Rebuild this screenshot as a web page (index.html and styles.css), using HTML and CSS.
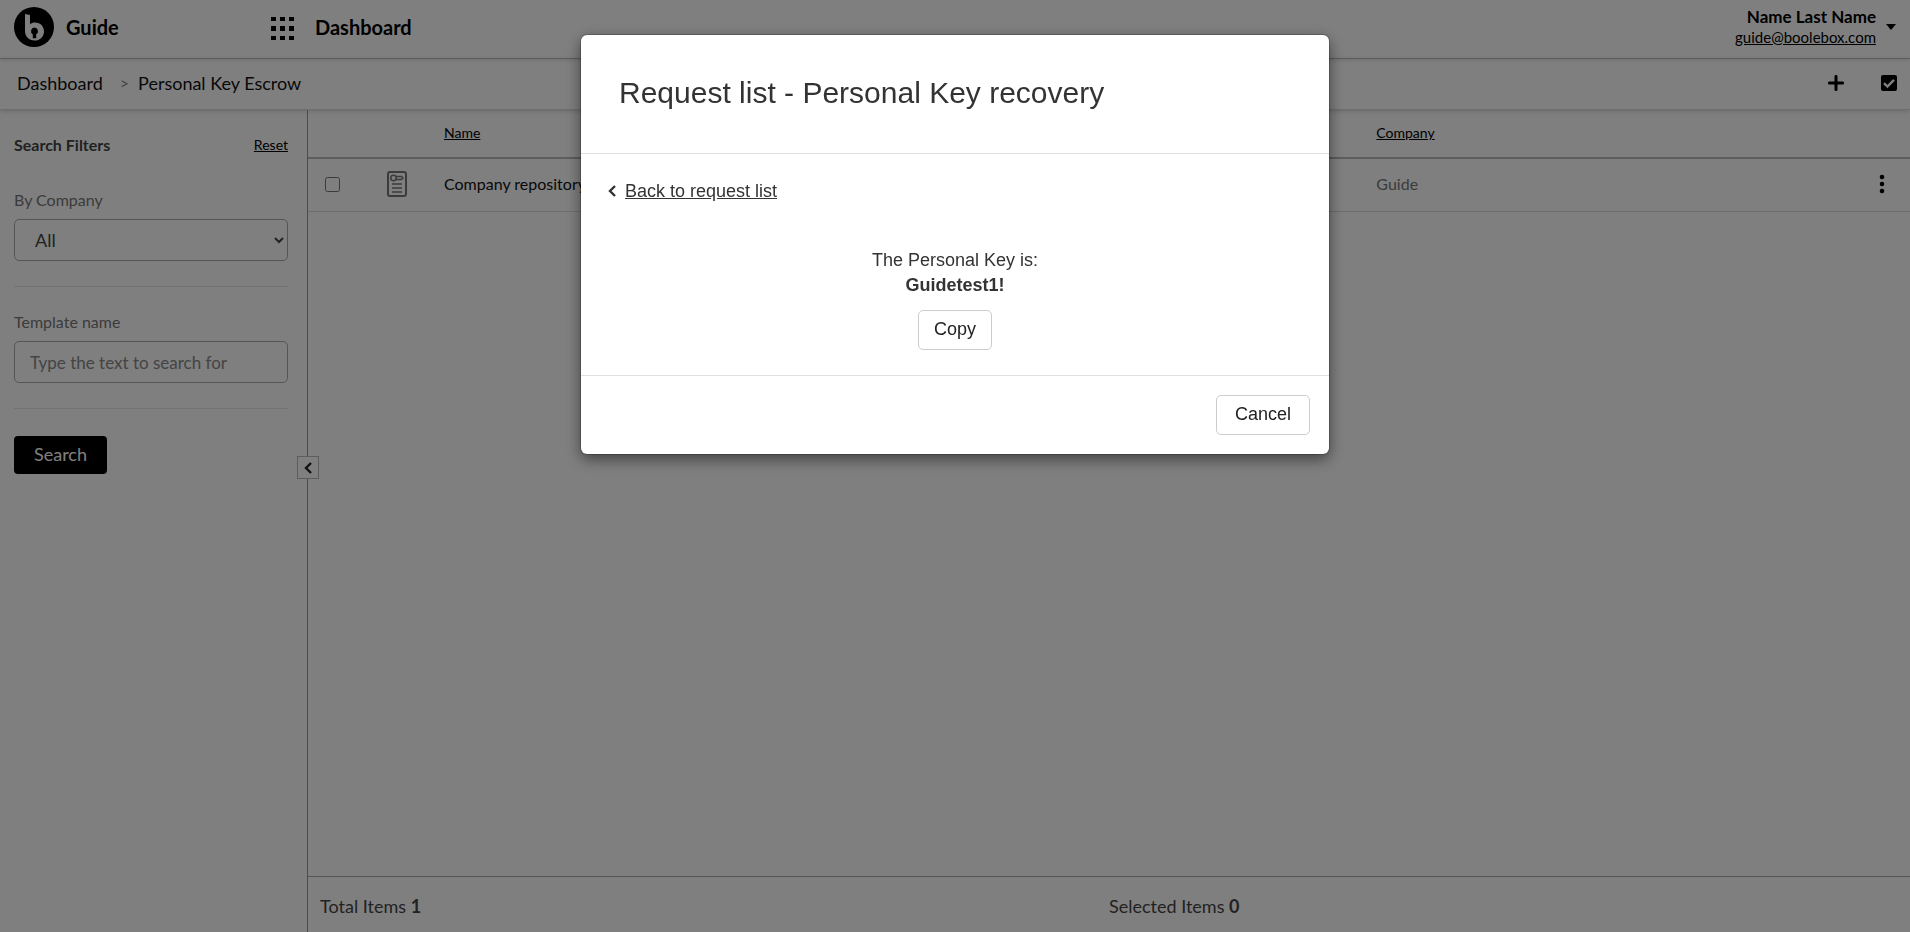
FILE: index.html
```html
<!DOCTYPE html>
<html lang="en">
<head>
    <meta charset="UTF-8">
    <meta name="viewport" content="width=device-width, initial-scale=1.0">
    <title>Personal Key Escrow</title>
    <link rel="stylesheet" href="styles.css">
</head>
<body>
    <header class="topbar">
        <div class="brand">
            <svg class="logo" viewBox="0 0 40 40" aria-hidden="true">
                <circle cx="20" cy="20" r="20"/>
                <path class="logo-b" d="M11 7l5 1v9.200c1.300-1.200 3-1.800 5-1.800 5.500 0 9 3.900 9 9s-3.900 9.100-9.500 9.100-9.500-3.900-9.500-9.500z"/>
                <path d="M20.500 20.500a3.600 3.600 0 0 0-1.700 6.700v4h3.400v-4a3.600 3.600 0 0 0-1.700-6.700z"/>
            </svg>
            <strong>Guide</strong>
        </div>
        <button type="button" class="icon-btn apps-btn" aria-label="Applications">
            <svg width="24" height="24" viewBox="0 0 24 24">
                <path d="M0 0h5v4H0zM9 0h5v4H9zM18 0h5v4h-5zM0 9h5v5H0zM9 9h5v5H9zM18 9h5v5h-5zM0 19h5v4H0zM9 19h5v4H9zM18 19h5v4h-5z"/>
            </svg>
        </button>
        <strong class="app-name">Dashboard</strong>
        <div class="user">
            <div class="user-info">
                <strong>Name Last Name</strong>
                <a href="#">guide@boolebox.com</a>
            </div>
            <button type="button" class="icon-btn" aria-label="User menu">
                <svg width="10" height="6" viewBox="0 0 10 6"><path d="M0 0h10L5 6z"/></svg>
            </button>
        </div>
    </header>

    <nav class="toolbar">
        <div class="breadcrumb">
            <a href="#">Dashboard</a>
            <span class="separator">&gt;</span>
            <a href="#">Personal Key Escrow</a>
        </div>
        <div class="tools">
            <button type="button" class="icon-btn" aria-label="Add">
                <svg width="16" height="16" viewBox="0 0 16 16"><path d="M6.500 1q0-1 1.500-1t1.500 1v5.500H15q1 0 1 1.500t-1 1.500H9.500V15q0 1-1.500 1t-1.500-1V9.500H1Q0 9.500 0 8t1-1.500h5.500z"/></svg>
            </button>
            <button type="button" class="icon-btn" aria-label="Select all">
                <svg width="16" height="16" viewBox="0 0 16 16">
                    <rect width="16" height="16" rx="2"/>
                    <path d="M3 8.200l3.400 3.300L13 4.800" fill="none" stroke="#fff" stroke-width="2.400"/>
                </svg>
            </button>
        </div>
    </nav>

    <div class="page">
        <aside class="sidebar">
            <div class="filters-head">
                <strong>Search Filters</strong>
                <a href="#">Reset</a>
            </div>
            <div class="filter">
                <label for="company">By Company</label>
                <select id="company">
                    <option>All</option>
                </select>
            </div>
            <div class="filter">
                <label for="template">Template name</label>
                <input type="text" id="template" placeholder="Type the text to search for">
            </div>
            <button type="button" class="search-btn">Search</button>
            <button type="button" class="collapse-btn" aria-label="Collapse filters">
                <svg width="8" height="12" viewBox="0 0 8 12"><path d="M7 1L2 6l5 5" fill="none" stroke="#222" stroke-width="2.400"/></svg>
            </button>
        </aside>

        <main class="content">
            <table class="list">
                <colgroup>
                    <col class="col-check">
                    <col class="col-icon">
                    <col class="col-name">
                    <col>
                    <col class="col-menu">
                </colgroup>
                <thead>
                    <tr>
                        <th></th>
                        <th></th>
                        <th><a href="#">Name</a></th>
                        <th><a href="#">Company</a></th>
                        <th></th>
                    </tr>
                </thead>
                <tbody>
                    <tr>
                        <td><input type="checkbox" class="row-check" aria-label="Select Company repository"></td>
                        <td>
                            <svg class="doc-icon" width="20" height="26" viewBox="0 0 20 26" aria-hidden="true">
                                <rect x="1" y="1" width="18" height="24" rx="2" stroke-width="2"/>
                                <circle cx="6.500" cy="7" r="2.700"/>
                                <path d="M9 5.500h5.500L16 7l-1.500 1.500H9M5 13h10M5 17h10M5 21h10"/>
                            </svg>
                        </td>
                        <td>Company repository</td>
                        <td class="muted">Guide</td>
                        <td>
                            <button type="button" class="icon-btn menu-btn" aria-label="Row menu">
                                <svg width="6" height="20" viewBox="0 0 6 20"><circle cx="3" cy="3" r="2.300"/><circle cx="3" cy="10" r="2.300"/><circle cx="3" cy="17" r="2.300"/></svg>
                            </button>
                        </td>
                    </tr>
                </tbody>
            </table>
            <footer class="totals">
                <div>Total Items <strong>1</strong></div>
                <div>Selected Items <strong>0</strong></div>
            </footer>
        </main>
    </div>

    <div class="overlay">
        <div class="modal" role="dialog" aria-modal="true" aria-labelledby="modalTitle">
            <div class="modal-header">
                <h1 id="modalTitle">Request list - Personal Key recovery</h1>
            </div>
            <div class="modal-body">
                <div class="back">
                    <svg width="8" height="12" viewBox="0 0 8 12" aria-hidden="true"><path d="M7 1L2 6l5 5" fill="none" stroke="#333" stroke-width="2.400"/></svg>
                    <a href="#">Back to request list</a>
                </div>
                <div class="key">
                    <div>The Personal Key is:</div>
                    <strong id="key">Guidetest1!</strong>
                    <button type="button" class="btn" id="copyBtn">Copy</button>
                </div>
            </div>
            <div class="modal-footer">
                <button type="button" class="btn btn-wide" id="cancelBtn">Cancel</button>
            </div>
        </div>
    </div>

    <script>
        document.getElementById('copyBtn').addEventListener('click', () => {
            navigator.clipboard.writeText(document.getElementById('key').textContent);
        });
        document.getElementById('cancelBtn').addEventListener('click', () => {
            document.querySelector('.overlay').style.display = 'none';
        });
    </script>
</body>
</html>
```
FILE: styles.css
```css
* {
    box-sizing: border-box;
}
body {
    margin: 0;
    min-height: 100vh;
    display: flex;
    flex-direction: column;
    background-color: #fff;
    color: #000;
    font-family: Lato, "Liberation Sans", sans-serif;
    font-size: 18px;
    line-height: 24px;
}
a {
    color: #000;
}
button, input, select {
    font-family: inherit;
    font-size: 18px;
}
svg {
    display: block;
}
.icon-btn {
    background: none;
    border: none;
    padding: 0;
    cursor: pointer;
}

/* top bar */
.topbar {
    display: flex;
    align-items: center;
    height: 59px;
    padding: 0 14px 5px;
    border-bottom: 1px solid #c4c4c4;
    box-shadow: 0 0 5px rgba(0, 0, 0, 0.2);
    font-size: 20px;
}
.brand {
    display: flex;
    align-items: center;
    gap: 12px;
    width: 257px;
}
.logo {
    width: 40px;
    height: 40px;
}
.logo-b {
    fill: #fff;
}
.apps-btn {
    padding-top: 4px;
}
.app-name {
    margin-left: 20px;
}
.user {
    display: flex;
    align-items: center;
    gap: 10px;
    margin-left: auto;
}
.user-info {
    display: flex;
    flex-direction: column;
    align-items: flex-end;
    font-size: 17px;
    line-height: 20px;
}
.user-info a {
    font-size: 15px;
}

/* breadcrumb */
.toolbar {
    display: flex;
    align-items: center;
    justify-content: space-between;
    height: 51px;
    padding: 0 13px 2px 17px;
    border-bottom: 1px solid #dcdcdc;
    box-shadow: 0 1px 5px rgba(0, 0, 0, 0.2);
}
.breadcrumb {
    display: flex;
    align-items: center;
    gap: 9px;
}
.breadcrumb a {
    color: #111;
    text-decoration: none;
}
.separator {
    padding-left: 8px;
    color: #888;
    font-size: 16px;
}
.tools {
    display: flex;
    gap: 37px;
}

.page {
    display: flex;
    flex: 1;
}

/* filters */
.sidebar {
    position: relative;
    flex: none;
    width: 308px;
    padding: 23px 19px 0 14px;
    border-right: 1px solid #999;
}
.filters-head {
    display: flex;
    align-items: center;
    justify-content: space-between;
    margin-bottom: 31px;
    color: #444;
    font-size: 16px;
}
.filters-head a {
    font-size: 14px;
}
.filter {
    display: flex;
    flex-direction: column;
    gap: 7px;
    margin-bottom: 23px;
    padding-bottom: 25px;
    border-bottom: 1px solid #e6e6e6;
}
.filter label {
    color: #777;
    font-size: 16px;
}
.filter select, .filter input {
    width: 100%;
    height: 42px;
    border: 1px solid #aaa;
    border-radius: 5px;
    background-color: #fff;
    color: #444;
}
.filter select {
    padding: 0 16px;
}
.filter input {
    padding: 0 15px;
    font-size: 17px;
}
.filter input::placeholder {
    color: #888;
}
.search-btn {
    height: 38px;
    margin-top: 4px;
    padding: 0 20px 2px;
    border: none;
    border-radius: 4px;
    background-color: #000;
    color: #fff;
    cursor: pointer;
}
.collapse-btn {
    position: absolute;
    top: 346px;
    right: -12px;
    display: flex;
    align-items: center;
    justify-content: center;
    width: 22px;
    height: 23px;
    padding: 0;
    border: 1px solid #bbb;
    background-color: #fff;
    cursor: pointer;
}

/* list */
.content {
    display: flex;
    flex: 1;
    flex-direction: column;
}
.list {
    width: 100%;
    table-layout: fixed;
    border-collapse: collapse;
    font-size: 16px;
}
.col-check {
    width: 60px;
}
.col-icon {
    width: 76px;
}
.col-name {
    width: 58.2%;
}
.col-menu {
    width: 40px;
}
.list th {
    height: 48px;
    padding: 0 0 2px;
    border-bottom: 2px solid #bbb;
    font-size: 14px;
    font-weight: normal;
    text-align: left;
}
.list td {
    height: 53px;
    padding: 0 0 1px;
    border-bottom: 1px solid #ddd;
    color: #111;
}
.list .muted {
    color: #777;
}
.row-check {
    display: block;
    width: 15px;
    height: 15px;
    margin: 0 0 0 17px;
}
.doc-icon {
    margin-left: 19px;
    fill: none;
    stroke: #777;
    stroke-width: 1.5;
}
.menu-btn {
    display: block;
    margin-left: 9px;
}
.totals {
    display: flex;
    align-items: center;
    height: 56px;
    margin-top: auto;
    padding: 3px 12px 0;
    border-top: 1px solid #aaa;
    color: #444;
}
.totals div {
    flex: 1;
}

/* dialog */
.overlay {
    position: fixed;
    inset: 0;
    padding-top: 35px;
    background-color: rgba(0, 0, 0, 0.5);
    font-family: "Liberation Sans", Arial, sans-serif;
}
.modal {
    max-width: 748px;
    margin: 0 auto;
    border-radius: 6px;
    background-color: #fff;
    box-shadow: 0 5px 15px rgba(0, 0, 0, 0.5), 0 0 0 1px rgba(0, 0, 0, 0.2);
    color: #333;
}
.modal-header {
    padding: 36px 38px 39px;
    border-bottom: 1px solid #e0e0e0;
}
.modal-header h1 {
    margin: 0;
    font-size: 30px;
    font-weight: normal;
    line-height: 43px;
}
.modal-body {
    padding: 25px 27px;
}
.back {
    display: flex;
    align-items: center;
    gap: 9px;
}
.back a {
    color: #333;
}
.key {
    display: flex;
    flex-direction: column;
    align-items: center;
    margin-top: 45px;
    line-height: 25px;
}
.btn {
    height: 40px;
    padding: 0 15px 1px;
    border: 1px solid #ccc;
    border-radius: 5px;
    background-color: #fff;
    color: #222;
    cursor: pointer;
}
.btn-wide {
    padding: 0 18px 1px;
}
.key .btn {
    margin-top: 12px;
}
.modal-footer {
    display: flex;
    justify-content: flex-end;
    padding: 19px;
    border-top: 1px solid #e0e0e0;
}
```
